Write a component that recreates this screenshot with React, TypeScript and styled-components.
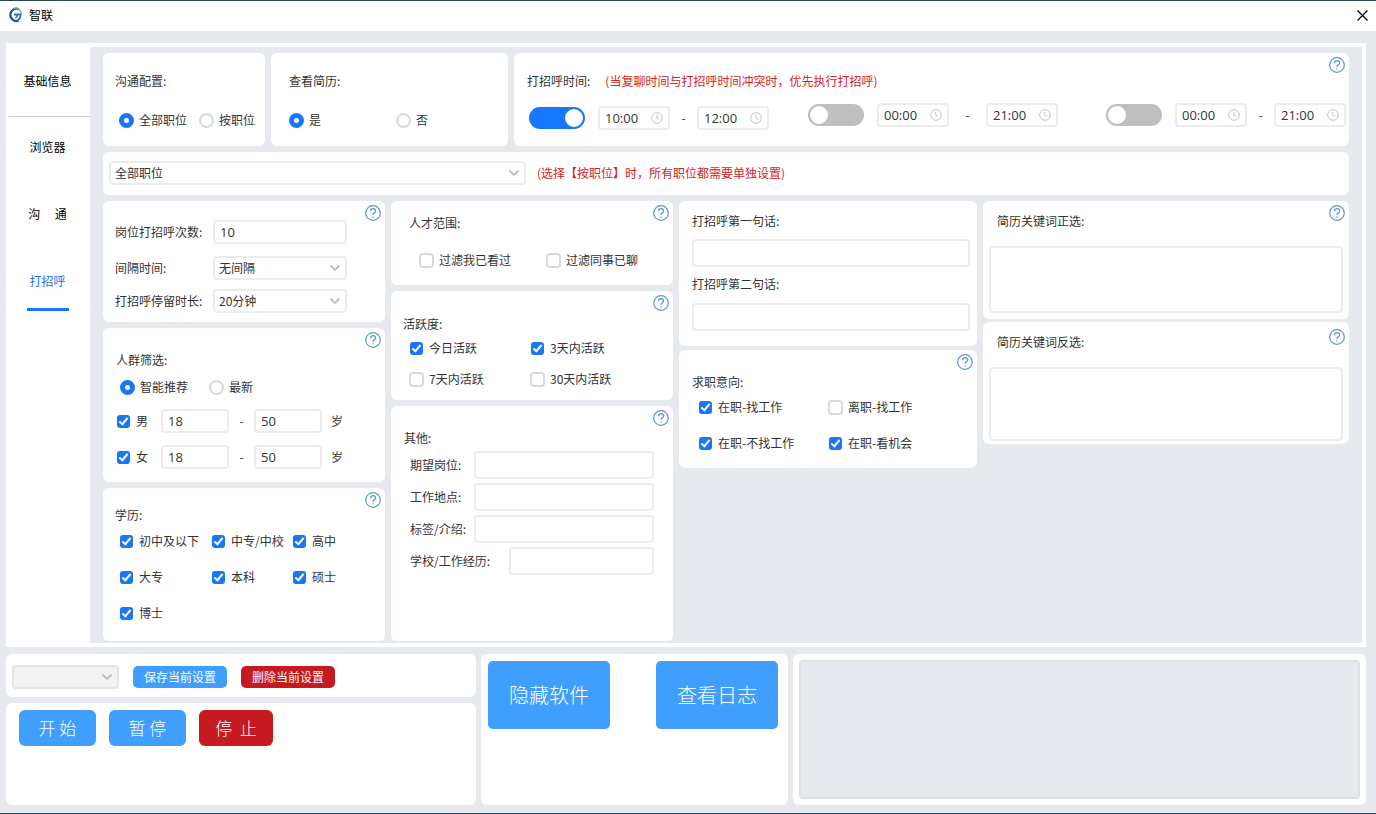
import React, { useId, useState } from "react";
import styled, { createGlobalStyle, css } from "styled-components";

const GlobalStyle = createGlobalStyle`
  *, *::before, *::after { box-sizing: border-box; }
  body {
    margin: 0;
    background: #e6eaee;
    color: #333;
    font: 12px/20px "Noto Sans CJK SC", sans-serif;
  }
  button, input, select, textarea { font: inherit; color: inherit; margin: 0; }
`;

const Window = styled.div`
  min-height: 100vh;
  display: flex;
  flex-direction: column;
  border-top: 1px solid #2b4558;
  border-bottom: 1px solid #2b4a60;
`;

const TitleBar = styled.header`
  display: flex;
  align-items: center;
  height: 30px;
  padding: 0 8px 2px;
  background: #fff;
  color: #000;
`;

const WindowTitle = styled.h1`
  margin: 0 auto 0 6px;
  font-size: 12px;
  font-weight: 400;
`;

const CloseButton = styled.button`
  display: flex;
  padding: 0;
  border: 0;
  background: none;
  color: #000;
`;

const Body = styled.div`
  flex: 1;
  padding: 12px 10px 8px 6px;
  display: flex;
  flex-direction: column;
  gap: 7px;
`;

const MainPanel = styled.div`
  display: flex;
  padding: 4px 4px 4px 0;
  background: #fff;
`;

const SideNav = styled.nav`
  flex: none;
  width: 84px;
  padding-left: 3px;
`;

const NavLink = styled.a<{ $first?: boolean; $active?: boolean }>`
  display: flex;
  flex-direction: column;
  align-items: center;
  gap: 17px;
  height: 67px;
  padding-top: 20px;
  padding-right: 4px;
  color: ${(p) => (p.$active ? "#1a76f0" : "#000")};
  text-decoration: none;
  white-space: pre;
  ${(p) =>
    p.$first &&
    css`
      height: 70px;
      padding-top: 24px;
      border-bottom: 1px solid #ccc;
    `}
  ${(p) =>
    p.$active &&
    css`
      &::after {
        content: "";
        flex: none;
        width: 42px;
        height: 3px;
        background: #1a76f0;
      }
    `}
`;

const Content = styled.main`
  flex: 1;
  min-width: 0;
  display: flex;
  flex-direction: column;
  gap: 6px;
  padding: 6px 13px 2px;
  background: #e6eaee;
`;

const TopRow = styled.div`
  display: grid;
  grid-template-columns: 162fr 237fr 835fr;
  gap: 6px;
`;

const Columns = styled.div`
  display: grid;
  grid-template-columns: minmax(0, 282fr) minmax(0, 282fr) minmax(0, 298fr) minmax(0, 366fr);
  gap: 6px;
`;

const Column = styled.div<{ $gap?: number }>`
  display: flex;
  flex-direction: column;
  gap: ${(p) => p.$gap ?? 6}px;
`;

const Card = styled.section<{ $pad: string; $grow?: boolean }>`
  position: relative;
  padding: ${(p) => p.$pad};
  border-radius: 6px;
  background: #fff;
  ${(p) => p.$grow && "flex: 1;"}
`;

const HelpButton = styled.button<{ $low?: boolean }>`
  position: absolute;
  top: ${(p) => (p.$low ? 7 : 4)}px;
  right: 4px;
  display: flex;
  padding: 0;
  border: 0;
  background: none;
  color: #5b93d8;
`;

const Title = styled.div<{ $mb: number }>`
  display: block;
  height: 20px;
  margin-bottom: ${(p) => p.$mb}px;
`;

const Note = styled.span`
  color: #d6221f;
`;

const Row = styled.div<{ $gap?: number; $left?: number; $mb?: number }>`
  display: flex;
  align-items: center;
  gap: ${(p) => p.$gap ?? 0}px;
  padding-left: ${(p) => p.$left ?? 0}px;
  margin-bottom: ${(p) => p.$mb ?? 0}px;
`;

const OptionGrid = styled.div<{ $cols: string; $left: number; $rowGap?: number }>`
  display: grid;
  grid-template-columns: ${(p) => p.$cols};
  row-gap: ${(p) => p.$rowGap ?? 16}px;
  padding-left: ${(p) => p.$left}px;
`;

const OptionLabel = styled.label`
  display: flex;
  align-items: center;
  gap: 5px;
  white-space: nowrap;
`;

const CheckInput = styled.input`
  appearance: none;
  position: relative;
  flex: none;
  width: 15px;
  height: 15px;
  border: 2px solid #d9d9d9;
  border-radius: 4px;
  background: #fff;
  &:checked {
    border: 1px solid transparent;
    background: #1877f5 padding-box;
  }
  &:checked::after {
    content: "";
    position: absolute;
    left: 4px;
    top: 1px;
    width: 5px;
    height: 9px;
    border: solid #fff;
    border-width: 0 2px 2px 0;
    transform: rotate(40deg);
  }
`;

const RadioInput = styled.input`
  appearance: none;
  flex: none;
  width: 15px;
  height: 15px;
  border: 2px solid #d9d9d9;
  border-radius: 50%;
  background: #fff;
  &:checked {
    border: 5px solid #1877f5;
  }
`;

const SwitchInput = styled.input`
  appearance: none;
  flex: none;
  display: flex;
  align-items: center;
  width: 56px;
  height: 22px;
  margin-right: 13px;
  padding: 0 2px;
  border-radius: 11px;
  background: #bfbfbf;
  && {
    margin-right: 13px;
  }
  &::after {
    content: "";
    width: 18px;
    height: 18px;
    border-radius: 50%;
    background: #fff;
  }
  &:checked {
    justify-content: flex-end;
    background: #1877ff;
  }
`;

const fieldFrame = css`
  border: 2px solid #ececec;
  border-radius: 4px;
  background: #fff;
`;

const TextInput = styled.input<{ $tall?: boolean; $width?: number }>`
  ${fieldFrame}
  min-width: 0;
  height: ${(p) => (p.$tall ? 28 : 24)}px;
  padding: 0 5px;
  font-family: "Open Sans", "Noto Sans CJK SC", sans-serif;
  font-size: 13px;
  ${(p) => (p.$width ? `width: ${p.$width}px;` : "flex: 1;")}
`;

const TextArea = styled.textarea<{ $height: number }>`
  ${fieldFrame}
  display: block;
  width: 100%;
  height: ${(p) => p.$height}px;
  resize: none;
`;

const LogArea = styled.textarea`
  display: block;
  width: 100%;
  height: 139px;
  border: 2px solid #dfe1e3;
  border-radius: 4px;
  background: #e6eaee;
  resize: none;
`;

const SelectFrame = styled.span<{ $width: number }>`
  position: relative;
  display: flex;
  flex: none;
  width: ${(p) => p.$width}px;
  color: #bdbdbd;
  svg {
    position: absolute;
    right: 6px;
    top: 8px;
    pointer-events: none;
  }
`;

const SelectInput = styled.select`
  ${fieldFrame}
  appearance: none;
  width: 100%;
  height: 24px;
  padding: 0 4px;
  color: #333;
  &:disabled {
    background: #f3f3f3;
    border-color: #e6e6e6;
    opacity: 1;
  }
`;

const FieldLabel = styled.label<{ $width: number }>`
  flex: none;
  width: ${(p) => p.$width}px;
  white-space: nowrap;
`;

const TimeFrame = styled.span`
  ${fieldFrame}
  display: flex;
  align-items: center;
  flex: none;
  width: 72px;
  height: 24px;
  padding: 0 5px;
  color: #c4c4c4;
`;

const TimeInput = styled.input`
  flex: 1;
  min-width: 0;
  height: 20px;
  padding: 0;
  border: 0;
  background: none;
  color: #333;
  font-family: "Open Sans", "Noto Sans CJK SC", sans-serif;
  font-size: 13px;
`;

const Schedule = styled.div`
  display: grid;
  grid-template-columns: 279fr 298fr 240px;
  align-items: start;
  min-height: 27px;
  padding-left: 2px;
`;

const TimeRange = styled.div<{ $low?: boolean }>`
  display: flex;
  align-items: center;
  align-self: ${(p) => (p.$low ? "end" : "start")};
`;

const Dash = styled.span<{ $width: number }>`
  flex: none;
  width: ${(p) => p.$width}px;
  text-align: center;
`;

const Footer = styled.footer`
  display: grid;
  grid-template-columns: 470fr 307fr 573fr;
  gap: 5px;
  flex: 1;
`;

const SmallButton = styled.button<{ $danger?: boolean }>`
  width: 94px;
  height: 22px;
  padding: 0;
  border: 0;
  border-radius: 5px;
  background: ${(p) => (p.$danger ? "#c51a20" : "#409eff")};
  color: #fff;
  white-space: pre;
`;

const ActionButton = styled(SmallButton)`
  width: ${(p) => (p.$danger ? 74 : 77)}px;
  height: 36px;
  border-radius: 6px;
  font-size: 17px;
  font-weight: 300;
`;

const LargeButton = styled(SmallButton)`
  width: 122px;
  height: 68px;
  font-size: 20px;
  font-weight: 300;
`;

const LargeButtons = styled.div`
  display: flex;
  justify-content: space-between;
`;

const Logo = () => (
  <svg width="15" height="16" viewBox="0 0 15 16" fill="none" aria-hidden="true">
    <path d="M10.500 2.100A6 6.200 0 1 0 10.800 13.600" stroke="#1d5a85" strokeWidth="2.200" />
    <path d="M5.500 1.700C9.500.6 13.600 3 13.700 7.600" stroke="#5ba3c0" strokeWidth="1.300" />
    <path d="M6 7.500h6.500c.3 2.800-1.300 5-3.700 6.200" stroke="#2f7ba3" strokeWidth="1.800" />
    <path d="M9.300 7.800c0 1.500-.6 2.600-1.900 3.300" stroke="#1d5a85" strokeWidth="1.300" />
  </svg>
);

const CloseIcon = () => (
  <svg width="11" height="11" viewBox="0 0 11 11" aria-hidden="true">
    <path d="M.5.5l10 10M10.500.5l-10 10" stroke="currentColor" strokeWidth="1.200" />
  </svg>
);

const Chevron = () => (
  <svg width="12" height="8" viewBox="0 0 12 8" aria-hidden="true">
    <path d="M1.500 1.500L6 6l4.500-4.500" fill="none" stroke="currentColor" strokeWidth="1.800" />
  </svg>
);

const Clock = () => (
  <svg width="12" height="12" viewBox="0 0 12 12" aria-hidden="true">
    <circle cx="6" cy="6" r="5.300" fill="none" stroke="currentColor" />
    <path d="M5.800 2.800v3.400l2.400 1.300" fill="none" stroke="currentColor" />
  </svg>
);

const Help = ({ low }: { low?: boolean }) => (
  <HelpButton type="button" aria-label="帮助" $low={low}>
    <svg width="16" height="16" viewBox="0 0 16 16" fill="none" stroke="currentColor" strokeWidth="1.200" aria-hidden="true">
      <circle cx="8" cy="8" r="7.300" />
      <path d="M5.500 6.300C5.500 4.600 6.600 3.600 8.100 3.600s2.500.9 2.500 2.300c0 1.900-2.600 2-2.600 4.100" />
      <path d="M8 11.200v1.400" />
    </svg>
  </HelpButton>
);

const Check = ({ text, on }: { text: string; on?: boolean }) => (
  <OptionLabel>
    <CheckInput type="checkbox" defaultChecked={on} />
    {text}
  </OptionLabel>
);

const Radio = ({ text, name, on }: { text: string; name: string; on?: boolean }) => (
  <OptionLabel>
    <RadioInput type="radio" name={name} defaultChecked={on} />
    {text}
  </OptionLabel>
);

type SelectProps = { id?: string; width: number; label?: string; value: string; disabled?: boolean };

const Select = ({ id, width, label, value, disabled }: SelectProps) => (
  <SelectFrame $width={width}>
    <SelectInput id={id} aria-label={label} disabled={disabled} defaultValue={value}>
      <option>{value}</option>
    </SelectInput>
    <Chevron />
  </SelectFrame>
);

const Time = ({ label, value }: { label: string; value: string }) => (
  <TimeFrame>
    <TimeInput aria-label={label} defaultValue={value} />
    <Clock />
  </TimeFrame>
);

const Range = ({ from, to, on, low, dash }: { from: string; to: string; on?: boolean; low?: boolean; dash: number }) => (
  <TimeRange $low={low}>
    <SwitchInput type="checkbox" role="switch" aria-label="启用时间段" defaultChecked={on} />
    <Time label="开始时间" value={from} />
    <Dash $width={dash}>-</Dash>
    <Time label="结束时间" value={to} />
  </TimeRange>
);

const AgeRow = ({ text, mb }: { text: string; mb?: number }) => (
  <Row $mb={mb}>
    <FieldLabel as="span" $width={45}>
      <Check text={text} on />
    </FieldLabel>
    <TextInput $width={68} aria-label={`${text} 最小年龄`} defaultValue="18" />
    <Dash $width={25}>-</Dash>
    <TextInput $width={68} aria-label={`${text} 最大年龄`} defaultValue="50" />
    <Dash $width={30}>岁</Dash>
  </Row>
);

const OtherField = ({ text, width }: { text: string; width: number }) => {
  const id = useId();
  return (
    <Row $left={6} $mb={4}>
      <FieldLabel htmlFor={id} $width={width}>{text}</FieldLabel>
      <TextInput id={id} $tall />
    </Row>
  );
};

const navItems = ["基础信息", "浏览器", "沟\u3000 通", "打招呼"];

export default function App() {
  const [active, setActive] = useState(3);
  return (
    <>
      <GlobalStyle />
      <Window>
        <TitleBar>
          <Logo />
          <WindowTitle>智联</WindowTitle>
          <CloseButton type="button" aria-label="关闭"><CloseIcon /></CloseButton>
        </TitleBar>
        <Body>
          <MainPanel>
            <SideNav>
              {navItems.map((item, i) => (
                <NavLink key={item} href="#" $first={i === 0} $active={i === active} onClick={() => setActive(i)}>
                  {item}
                </NavLink>
              ))}
            </SideNav>
            <Content>
              <TopRow>
                <Card $pad="18px 0 16px 12px">
                  <Title $mb={19}>沟通配置:</Title>
                  <Row $left={4} $gap={12}>
                    <Radio name="scope" text="全部职位" on />
                    <Radio name="scope" text="按职位" />
                  </Row>
                </Card>
                <Card $pad="18px 0 16px 18px">
                  <Title $mb={19}>查看简历:</Title>
                  <OptionGrid $cols="107px auto" $left={0}>
                    <Radio name="resume" text="是" on />
                    <Radio name="resume" text="否" />
                  </OptionGrid>
                </Card>
                <Card $pad="18px 3px 16px 13px">
                  <Row $gap={15} $mb={12}>
                    <span>打招呼时间:</span>
                    <Note>(当复聊时间与打招呼时间冲突时，优先执行打招呼)</Note>
                  </Row>
                  <Schedule>
                    <Range from="10:00" to="12:00" on low dash={27} />
                    <Range from="00:00" to="21:00" dash={37} />
                    <Range from="00:00" to="21:00" dash={27} />
                  </Schedule>
                  <Help />
                </Card>
              </TopRow>
              <Card $pad="9px 6px 10px">
                <Row $gap={11}>
                  <Select width={417} label="职位" value="全部职位" />
                  <Note>(选择【按职位】时，所有职位都需要单独设置)</Note>
                </Row>
              </Card>
              <Columns>
                <Column>
                  <Card $pad="19px 38px 9px 12px">
                    <Row $mb={12}>
                      <FieldLabel htmlFor="count" $width={98}>岗位打招呼次数:</FieldLabel>
                      <TextInput id="count" defaultValue="10" />
                    </Row>
                    <Row $mb={9}>
                      <FieldLabel htmlFor="interval" $width={98}>间隔时间:</FieldLabel>
                      <Select id="interval" width={134} value="无间隔" />
                    </Row>
                    <Row>
                      <FieldLabel htmlFor="stay" $width={98}>打招呼停留时长:</FieldLabel>
                      <Select id="stay" width={134} value="20分钟" />
                    </Row>
                    <Help />
                  </Card>
                  <Card $pad="22px 12px 13px 13px">
                    <Title $mb={7}>人群筛选:</Title>
                    <Row $left={4} $gap={21} $mb={12}>
                      <Radio name="crowd" text="智能推荐" on />
                      <Radio name="crowd" text="最新" />
                    </Row>
                    <AgeRow text="男" mb={12} />
                    <AgeRow text="女" />
                    <Help />
                  </Card>
                  <Card $pad="17px 0 18px 12px">
                    <Title $mb={6}>学历:</Title>
                    <OptionGrid $cols="92px 81px auto" $left={4}>
                      <Check text="初中及以下" on />
                      <Check text="中专/中校" on />
                      <Check text="高中" on />
                      <Check text="大专" on />
                      <Check text="本科" on />
                      <Check text="硕士" on />
                      <Check text="博士" on />
                    </OptionGrid>
                    <Help />
                  </Card>
                </Column>
                <Column>
                  <Card $pad="12px 0 15px 18px">
                    <Title $mb={17}>人才范围:</Title>
                    <OptionGrid $cols="127px auto" $left={10}>
                      <Check text="过滤我已看过" />
                      <Check text="过滤同事已聊" />
                    </OptionGrid>
                    <Help />
                  </Card>
                  <Card $pad="23px 0 11px 12px">
                    <Title $mb={4}>活跃度:</Title>
                    <OptionGrid $cols="121px auto" $left={6} $rowGap={11}>
                      <Check text="今日活跃" on />
                      <Check text="3天内活跃" on />
                      <Check text="7天内活跃" />
                      <Check text="30天内活跃" />
                    </OptionGrid>
                    <Help />
                  </Card>
                  <Card $grow $pad="22px 19px 12px 13px">
                    <Title $mb={3}>其他:</Title>
                    <OtherField text="期望岗位:" width={64} />
                    <OtherField text="工作地点:" width={64} />
                    <OtherField text="标签/介绍:" width={64} />
                    <OtherField text="学校/工作经历:" width={99} />
                    <Help />
                  </Card>
                </Column>
                <Column $gap={4}>
                  <Card $pad="10px 7px 15px 13px">
                    <Title as="label" htmlFor="first" $mb={8}>打招呼第一句话:</Title>
                    <Row $mb={7}><TextInput id="first" $tall /></Row>
                    <Title as="label" htmlFor="second" $mb={9}>打招呼第二句话:</Title>
                    <Row><TextInput id="second" $tall /></Row>
                  </Card>
                  <Card $pad="22px 0 15px 13px">
                    <Title $mb={5}>求职意向:</Title>
                    <OptionGrid $cols="130px auto" $left={6}>
                      <Check text="在职-找工作" on />
                      <Check text="离职-找工作" />
                      <Check text="在职-不找工作" on />
                      <Check text="在职-看机会" on />
                    </OptionGrid>
                    <Help />
                  </Card>
                </Column>
                <Column $gap={3}>
                  <Card $pad="10px 6px 6px">
                    <Row $left={8} $mb={15}><label htmlFor="include">简历关键词正选:</label></Row>
                    <TextArea id="include" $height={67} />
                    <Help />
                  </Card>
                  <Card $pad="10px 6px 3px">
                    <Row $left={8} $mb={15}><label htmlFor="exclude">简历关键词反选:</label></Row>
                    <TextArea id="exclude" $height={74} />
                    <Help low />
                  </Card>
                </Column>
              </Columns>
            </Content>
          </MainPanel>
          <Footer>
            <Column>
              <Card $pad="11px 6px 8px">
                <Row $gap={14}>
                  <Select width={107} label="已保存的设置" value="" disabled />
                  <SmallButton type="button">保存当前设置</SmallButton>
                  <SmallButton type="button" $danger>删除当前设置</SmallButton>
                </Row>
              </Card>
              <Card $grow $pad="7px 13px">
                <Row $gap={13}>
                  <ActionButton type="button">开 始</ActionButton>
                  <ActionButton type="button">暂 停</ActionButton>
                  <ActionButton type="button" $danger>停  止</ActionButton>
                </Row>
              </Card>
            </Column>
            <Card $pad="7px 10px 7px 7px">
              <LargeButtons>
                <LargeButton type="button">隐藏软件</LargeButton>
                <LargeButton type="button">查看日志</LargeButton>
              </LargeButtons>
            </Card>
            <Card $pad="6px">
              <LogArea aria-label="日志" readOnly />
            </Card>
          </Footer>
        </Body>
      </Window>
    </>
  );
}
